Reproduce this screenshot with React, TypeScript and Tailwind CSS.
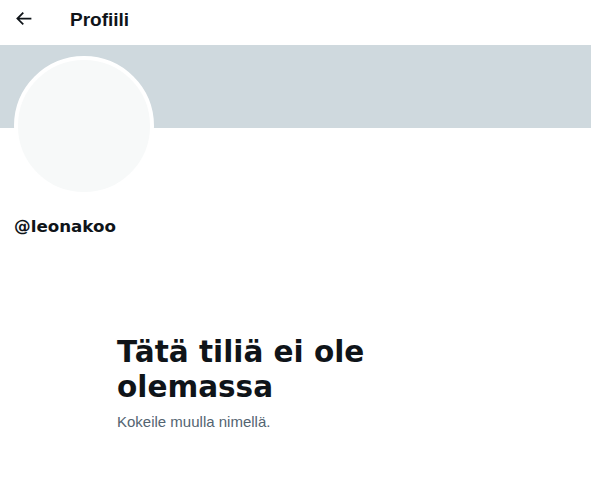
export default function App() {
  return (
    <div className="min-h-screen bg-white font-['Liberation_Sans',Arial,sans-serif] text-[#0f1419]">
      <header className="flex h-[45px] items-center px-[13px] pb-[6px]">
        <button className="mb-[3px] flex h-[21px] w-[21px] items-center justify-center text-[#0f1419]">
          <svg viewBox="0 0 24 24" className="h-[21px] w-[21px]" fill="currentColor">
            <path d="M7.414 13l5.043 5.04-1.414 1.42L3.586 12l7.457-7.46 1.414 1.42L7.414 11H21v2H7.414z" />
          </svg>
        </button>
        <h1 className="ml-[36px] text-[19px] font-bold leading-6">Profiili</h1>
      </header>

      <div className="h-[83px] bg-[#cfd9de]" />

      <div className="px-[14px]">
        <div className="-mt-[72px] h-[140px] w-[140px] rounded-full border-4 border-white bg-[#f7f9f9]" />
        <div className="mt-[18px] font-['DejaVu_Sans',sans-serif] text-[16.7px] font-bold leading-6">@leonakoo</div>
      </div>

      <div className="mt-[97px] px-[117px]">
        <h2 className="font-['DejaVu_Sans',sans-serif] text-[29.5px] font-bold leading-[35px]">
          Tätä tiliä ei ole olemassa
        </h2>
        <p className="mt-[7px] text-[15px] leading-5 text-[#536471]">Kokeile muulla nimellä.</p>
      </div>
    </div>
  )
}
